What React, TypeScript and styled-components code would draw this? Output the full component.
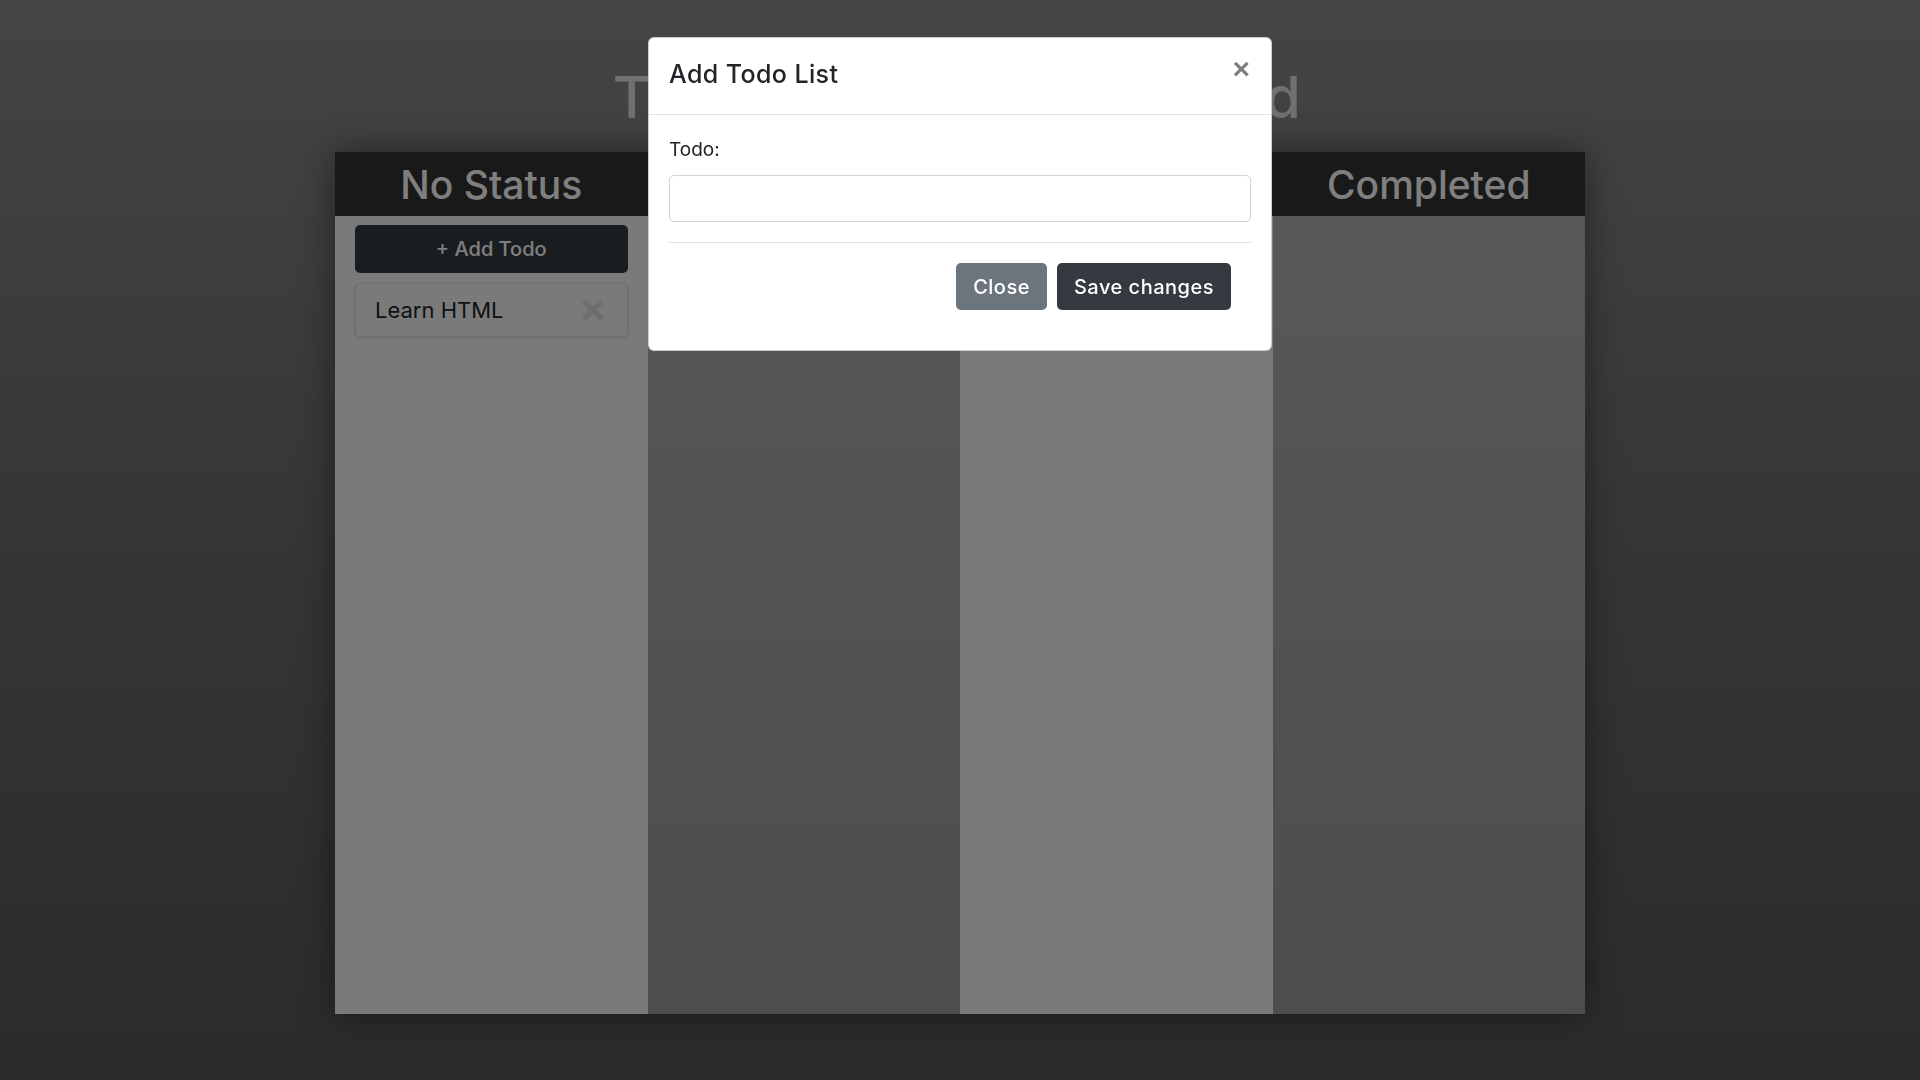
import { FC } from 'react';
import styled, { createGlobalStyle } from 'styled-components';
import { FaTimes } from 'react-icons/fa';

const GlobalStyle = createGlobalStyle`
  html, body {
    margin: 0;
    padding: 0;
    height: 100%;
  }
  body {
    font-family: "Inter", "Liberation Sans", sans-serif;
    color: #212529;
  }
  * {
    box-sizing: border-box;
  }
`;

type Todo = { id: number; text: string };
type Column = { title: string; tinted: boolean; todos?: Todo[]; canAdd?: boolean };

const columns: Column[] = [
  { title: 'No Status', tinted: false, canAdd: true, todos: [{ id: 1, text: 'Learn HTML' }] },
  { title: 'Not Started', tinted: true },
  { title: 'In Progress', tinted: false },
  { title: 'Completed', tinted: true },
];

const Page = styled.div`
  min-height: 100vh;
  display: flex;
  flex-direction: column;
  align-items: center;
  background: linear-gradient(180deg, #8a8a8a 0%, #6c6c6c 50%, #565656 100%);
`;

const Title = styled.h1`
  margin: 62px 0 20px;
  height: 70px;
  font-size: 58px;
  line-height: 70px;
  font-weight: 500;
  letter-spacing: 6.5px;
  color: #e0e0e0;
  white-space: nowrap;
`;

const Board = styled.div`
  width: 1250px;
  height: 862px;
  display: grid;
  grid-template-columns: repeat(4, 1fr);
  box-shadow: 0 0 36px rgba(0, 0, 0, 0.45);
`;

const StatusColumn = styled.div<{ $tinted: boolean }>`
  display: flex;
  flex-direction: column;
  background: ${({ $tinted }) => ($tinted ? 'rgba(255, 255, 255, 0.4)' : '#f4f4f4')};
`;

const ColumnHeader = styled.div`
  height: 64px;
  display: flex;
  align-items: center;
  justify-content: center;
  background: #333;
  color: #fff;
  font-size: 39px;
  font-weight: 500;
`;

const ColumnBody = styled.div`
  display: flex;
  flex-direction: column;
  gap: 10px;
  padding: 9px 20px;
`;

const AddButton = styled.button`
  height: 48px;
  border: none;
  border-radius: 5px;
  background: #343a40;
  color: #fff;
  font-family: inherit;
  font-size: 20px;
  font-weight: 500;
`;

const TodoCard = styled.div`
  height: 54px;
  display: flex;
  align-items: center;
  justify-content: space-between;
  padding: 0 19px 0 19px;
  background: #f5f5f5;
  border: 1px solid #dcdcdc;
  border-radius: 5px;
  box-shadow: 0 1px 3px rgba(0, 0, 0, 0.12);
  font-size: 22px;
  color: #212529;
`;

const RemoveIcon = styled(FaTimes)`
  color: #dcdcdc;
`;

const Backdrop = styled.div`
  position: fixed;
  inset: 0;
  background: rgba(0, 0, 0, 0.5);
`;

const ModalDialog = styled.div`
  position: fixed;
  top: 37px;
  left: 50%;
  transform: translateX(-50%);
  width: 624px;
  background: #fff;
  border: 1px solid rgba(0, 0, 0, 0.2);
  border-radius: 6px;
`;

const ModalHeader = styled.div`
  display: flex;
  align-items: flex-start;
  justify-content: space-between;
  padding: 18px 20px 21px;
  border-bottom: 1px solid #dee2e6;
`;

const ModalTitle = styled.h5`
  margin: 0;
  font-size: 25px;
  line-height: 37px;
  font-weight: 500;
  letter-spacing: 0.4px;
  color: #212529;
`;

const CloseX = styled.button`
  margin: -2px 1px 0 0;
  padding: 0;
  border: none;
  background: transparent;
  font-family: "Liberation Sans", sans-serif;
  font-size: 30px;
  line-height: 1;
  font-weight: 700;
  color: #000;
  opacity: 0.5;
`;

const ModalBody = styled.div`
  padding: 20px 20px 40px;
`;

const Label = styled.label`
  display: block;
  margin-bottom: 10px;
  font-size: 19px;
  line-height: 30px;
  color: #212529;
`;

const TextInput = styled.input`
  display: block;
  width: 100%;
  height: 47px;
  padding: 7px 15px;
  border: 1px solid #ced4da;
  border-radius: 5px;
  font-family: inherit;
  font-size: 20px;
`;

const Divider = styled.hr`
  margin: 20px 0;
  border: 0;
  border-top: 1px solid #dee2e6;
`;

const Actions = styled.div`
  display: flex;
  justify-content: flex-end;
  gap: 10px;
  padding-right: 20px;
`;

const ActionButton = styled.button<{ $variant: 'secondary' | 'dark' }>`
  height: 47px;
  padding: 0 17px;
  border: none;
  border-radius: 5px;
  background: ${({ $variant }) => ($variant === 'secondary' ? '#6c757d' : '#343a40')};
  color: #fff;
  font-family: inherit;
  font-size: 20px;
  font-weight: 500;
  letter-spacing: 0.5px;
`;

const AddTodoModal: FC = () => (
  <>
    <Backdrop />
    <ModalDialog>
      <ModalHeader>
        <ModalTitle>Add Todo List</ModalTitle>
        <CloseX>×</CloseX>
      </ModalHeader>
      <ModalBody>
        <Label htmlFor="todo-input">Todo:</Label>
        <TextInput id="todo-input" type="text" />
        <Divider />
        <Actions>
          <ActionButton $variant="secondary">Close</ActionButton>
          <ActionButton $variant="dark">Save changes</ActionButton>
        </Actions>
      </ModalBody>
    </ModalDialog>
  </>
);

export default function App() {
  return (
    <>
      <GlobalStyle />
      <Page>
        <Title>Todo List Dashboard</Title>
        <Board>
          {columns.map((column) => (
            <StatusColumn key={column.title} $tinted={column.tinted}>
              <ColumnHeader>{column.title}</ColumnHeader>
              <ColumnBody>
                {column.canAdd && <AddButton>+ Add Todo</AddButton>}
                {column.todos?.map((todo) => (
                  <TodoCard key={todo.id}>
                    <span>{todo.text}</span>
                    <RemoveIcon size={30} />
                  </TodoCard>
                ))}
              </ColumnBody>
            </StatusColumn>
          ))}
        </Board>
      </Page>
      <AddTodoModal />
    </>
  );
}
